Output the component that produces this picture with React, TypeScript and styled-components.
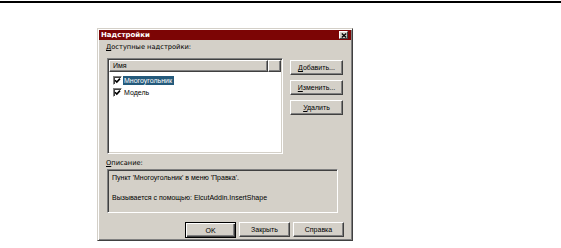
import React from 'react';
import styled, { createGlobalStyle } from 'styled-components';

const Global = createGlobalStyle`
  html, body { margin: 0; padding: 0; background: #fff; }
  body { font-family: "Liberation Sans", Arial, sans-serif; }
`;

const FACE = '#d4d0c8';

const Page = styled.div`
  width: 561px;
  height: 248px;
  overflow: hidden;
`;

const TopRule = styled.div`
  margin-top: 1px;
  height: 2px;
  background: #000;
`;

const Window = styled.div`
  margin: 25px 0 0 97px;
  width: 256px;
  height: 213px;
  box-sizing: border-box;
  background: ${FACE};
  border: 1px solid;
  border-color: ${FACE} #404040 #404040 ${FACE};
  box-shadow: inset 1px 1px 0 #fff, inset -1px -1px 0 #808080;
  padding: 1px;
  display: flex;
  flex-direction: column;
`;

const TitleBar = styled.div`
  height: 10px;
  background: #7c0505;
  display: flex;
  align-items: center;
  justify-content: space-between;
  padding: 0 3px 0 2px;
`;

const Title = styled.span`
  color: #fff;
  font-family: "DejaVu Sans", Verdana, sans-serif;
  font-weight: bold;
  font-size: 7px;
  line-height: 10px;
`;

const CloseBtn = styled.div`
  width: 9px;
  height: 8px;
  box-sizing: border-box;
  background: ${FACE};
  border: 1px solid;
  border-color: #fff #404040 #404040 #fff;
  display: flex;
  align-items: center;
  justify-content: center;
`;

const Content = styled.div`
  flex: 1;
  display: flex;
  flex-direction: column;
  padding: 3px 7px 0 7px;
  font-size: 7px;
  color: #000;
`;

const Label = styled.div<{ $top?: number }>`
  font-family: "DejaVu Sans", Verdana, sans-serif;
  font-size: 6.7px;
  line-height: 9px;
  height: 9px;
  margin-top: ${p => p.$top ?? 0}px;
  white-space: nowrap;
`;

const Key = styled.span`
  text-decoration: underline;
`;

const MainRow = styled.div`
  display: flex;
  margin-top: 6px;
`;

const ListBox = styled.div`
  margin-left: 1px;
  width: 176px;
  height: 96px;
  box-sizing: border-box;
  background: #fff;
  border: 1px solid;
  border-color: #808080 #fff #fff #808080;
  box-shadow: inset 1px 1px 0 #404040, inset -1px -1px 0 ${FACE};
  padding: 1px;
  display: flex;
  flex-direction: column;
`;

const Header = styled.div`
  display: flex;
  height: 12px;
`;

const HeaderCell = styled.div<{ $w?: number }>`
  ${p => (p.$w ? `width: ${p.$w}px;` : 'flex: 1;')}
  box-sizing: border-box;
  background: ${FACE};
  border: 1px solid;
  border-color: #fff #404040 #404040 #fff;
  box-shadow: inset -1px -1px 0 #808080;
  padding-left: 3px;
  line-height: 10px;
  font-size: 7px;
`;

const Items = styled.div`
  display: flex;
  flex-direction: column;
  padding: 3px 0 0 4px;
  gap: 1px;
`;

const Item = styled.div`
  display: flex;
  align-items: center;
  height: 11px;
`;

const Check = styled.div`
  width: 9px;
  height: 9px;
  box-sizing: border-box;
  border: 1px solid;
  border-color: #808080 #fff #fff #808080;
  box-shadow: inset 1px 1px 0 #404040;
  background: #fff;
  display: flex;
  align-items: center;
  justify-content: center;
  margin-right: 1px;
`;

const ItemText = styled.span<{ $sel?: boolean }>`
  padding: 0 2px 0 1px;
  line-height: 9px;
  background: ${p => (p.$sel ? '#245a7c' : 'transparent')};
  color: ${p => (p.$sel ? '#fff' : '#000')};
`;

const SideButtons = styled.div`
  margin-left: 7px;
  padding-top: 2px;
  display: flex;
  flex-direction: column;
  gap: 5px;
`;

const Button = styled.div<{ $w?: number; $default?: boolean }>`
  width: ${p => p.$w ?? 53}px;
  height: ${p => (p.$default ? 16 : 15)}px;
  box-sizing: border-box;
  background: ${FACE};
  border: 1px solid;
  border-color: ${p => (p.$default ? '#000' : '#fff #404040 #404040 #fff')};
  box-shadow: ${p =>
    p.$default
      ? 'inset 1px 1px 0 #fff, inset -1px -1px 0 #404040, inset -2px -2px 0 #808080'
      : 'inset -1px -1px 0 #808080'};
  display: flex;
  align-items: center;
  justify-content: center;
  font-size: 7px;
  line-height: 9px;
`;

const DescBox = styled.div`
  margin: 1px 6px 0 1px;
  height: 44px;
  box-sizing: border-box;
  border: 1px solid;
  border-color: #808080 #fff #fff #808080;
  box-shadow: inset 1px 1px 0 #404040, inset -1px -1px 0 ${FACE};
  padding: 3px 4px 0 4px;
  display: flex;
  flex-direction: column;
  gap: 11px;
`;

const DescLine = styled.div`
  line-height: 9px;
  white-space: nowrap;
`;

const BottomRow = styled.div`
  margin-top: 9px;
  display: flex;
  justify-content: flex-end;
  gap: 3px;
`;

const CheckMark = () => (
  <svg width="7" height="7" viewBox="0 0 7 7">
    <path d="M1 3.2 L2.8 5 L6 1.6" stroke="#000" strokeWidth="1.6" fill="none" />
  </svg>
);

const CloseX = () => (
  <svg width="6" height="5" viewBox="0 0 6 5">
    <path d="M0.8 0.5 L5.2 4.5 M5.2 0.5 L0.8 4.5" stroke="#000" strokeWidth="1.3" />
  </svg>
);

export default function App() {
  return (
    <Page>
      <Global />
      <TopRule />
      <Window>
        <TitleBar>
          <Title>Надстройки</Title>
          <CloseBtn>
            <CloseX />
          </CloseBtn>
        </TitleBar>
        <Content>
          <Label>
            <Key>Д</Key>оступные надстройки:
          </Label>
          <MainRow>
            <ListBox>
              <Header>
                <HeaderCell $w={159}>Имя</HeaderCell>
                <HeaderCell />
              </Header>
              <Items>
                <Item>
                  <Check>
                    <CheckMark />
                  </Check>
                  <ItemText $sel>Многоугольник</ItemText>
                </Item>
                <Item>
                  <Check>
                    <CheckMark />
                  </Check>
                  <ItemText>Модель</ItemText>
                </Item>
              </Items>
            </ListBox>
            <SideButtons>
              <Button>
                <span>
                  <Key>Д</Key>обавить...
                </span>
              </Button>
              <Button>
                <span>
                  <Key>И</Key>зменить...
                </span>
              </Button>
              <Button>
                <span>
                  <Key>У</Key>далить
                </span>
              </Button>
            </SideButtons>
          </MainRow>
          <Label $top={5}>
            <Key>О</Key>писание:
          </Label>
          <DescBox>
            <DescLine>Пункт 'Многоугольник' в меню 'Правка'.</DescLine>
            <DescLine>Вызывается с помощью: ElcutAddin.InsertShape</DescLine>
          </DescBox>
          <BottomRow>
            <Button $w={51} $default>OK</Button>
            <Button $w={51}>Закрыть</Button>
            <Button $w={51}>Справка</Button>
          </BottomRow>
        </Content>
      </Window>
    </Page>
  );
}
